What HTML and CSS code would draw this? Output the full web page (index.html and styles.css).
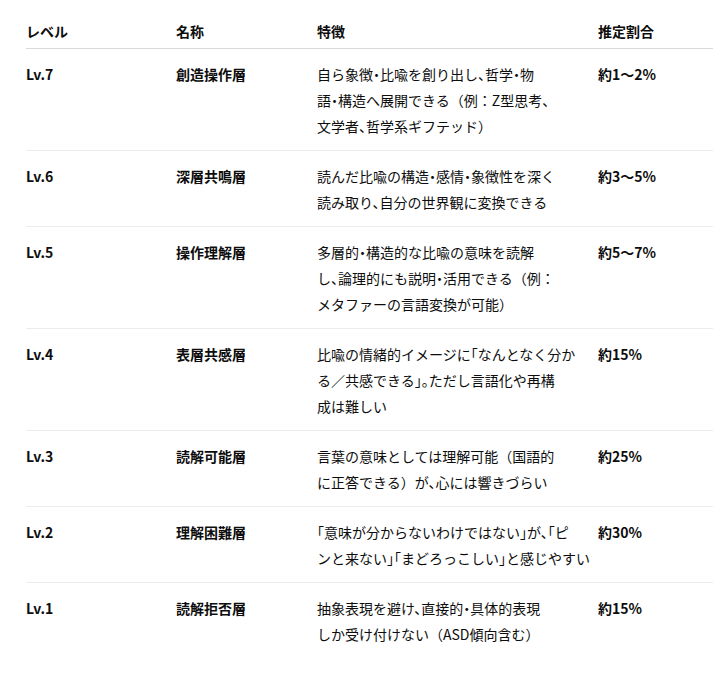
FILE: index.html
```html
<!DOCTYPE html>
<html lang="ja">
<head>
<meta charset="utf-8">
<link rel="stylesheet" href="styles.css">
</head>
<body>
<div class="wrap">
<table class="levels">
<colgroup>
<col class="c1"><col class="c2"><col class="c3"><col class="c4">
</colgroup>
<thead>
<tr><th>レベル</th><th>名称</th><th>特徴</th><th>推定割合</th></tr>
</thead>
<tbody>
<tr><td class="b">Lv.7</td><td class="b">創造操作層</td><td class="desc">自ら象徴・比喩を創り出し、哲学・物<br>語・構造へ展開できる<span class="fw">（</span>例<span class="fw">：</span>Z型思考、<br>文学者、哲学系ギフテッド<span class="fw">）</span></td><td class="b">約1～2%</td></tr>
<tr><td class="b">Lv.6</td><td class="b">深層共鳴層</td><td class="desc">読んだ比喩の構造・感情・象徴性を深く<br>読み取り、自分の世界観に変換できる</td><td class="b">約3～5%</td></tr>
<tr><td class="b">Lv.5</td><td class="b">操作理解層</td><td class="desc">多層的・構造的な比喩の意味を読解<br>し、論理的にも説明・活用できる<span class="fw">（</span>例<span class="fw">：</span><br>メタファーの言語変換が可能<span class="fw">）</span></td><td class="b">約5～7%</td></tr>
<tr><td class="b">Lv.4</td><td class="b">表層共感層</td><td class="desc">比喩の情緒的イメージに「なんとなく分か<br>る／共感できる」。ただし言語化や再構<br>成は難しい</td><td class="b">約15%</td></tr>
<tr><td class="b">Lv.3</td><td class="b">読解可能層</td><td class="desc">言葉の意味としては理解可能<span class="fw">（</span>国語的<br>に正答できる<span class="fw">）</span>が、心には響きづらい</td><td class="b">約25%</td></tr>
<tr><td class="b">Lv.2</td><td class="b">理解困難層</td><td class="desc">「意味が分からないわけではない」が、「ピ<br>ンと来ない」「まどろっこしい」と感じやすい</td><td class="b">約30%</td></tr>
<tr><td class="b">Lv.1</td><td class="b">読解拒否層</td><td class="desc">抽象表現を避け、直接的・具体的表現<br>しか受け付けない<span class="fw">（</span>ASD傾向含む<span class="fw">）</span></td><td class="b">約15%</td></tr>
</tbody>
</table>
</div>
</body>
</html>
```

FILE: styles.css
```css
html, body {
  margin: 0;
  padding: 0;
  background: #ffffff;
}

body {
  font-family: "Noto Sans CJK JP", "Noto Sans", sans-serif;
  font-size: 14px;
  line-height: 26px;
  color: #0d0d0d;
  overflow: hidden;
}

.wrap {
  padding: 18px 0 0 26px;
  overflow: hidden;
}

.levels {
  border-collapse: collapse;
  table-layout: fixed;
  width: 687px;
}

.c1 { width: 134px; }
.c2 { width: 141px; }
.c3 { width: 281px; }
.c4 { width: 131px; }

.levels th {
  text-align: left;
  font-weight: 700;
  padding: 0 16px 4px 16px;
  border-bottom: 1px solid #d9d9d9;
  vertical-align: bottom;
  white-space: nowrap;
}

.levels td {
  padding: 12px 16px 11px 16px;
  vertical-align: top;
  border-bottom: 1px solid #ececec;
  white-space: nowrap;
}

.levels th:first-child,
.levels td:first-child {
  padding-left: 0;
}

.levels tbody tr:last-child td {
  border-bottom: none;
}

.b {
  font-weight: 700;
}

.desc {
  font-weight: 400;
  font-feature-settings: "halt";
}

.desc .fw {
  font-feature-settings: normal;
}
```
